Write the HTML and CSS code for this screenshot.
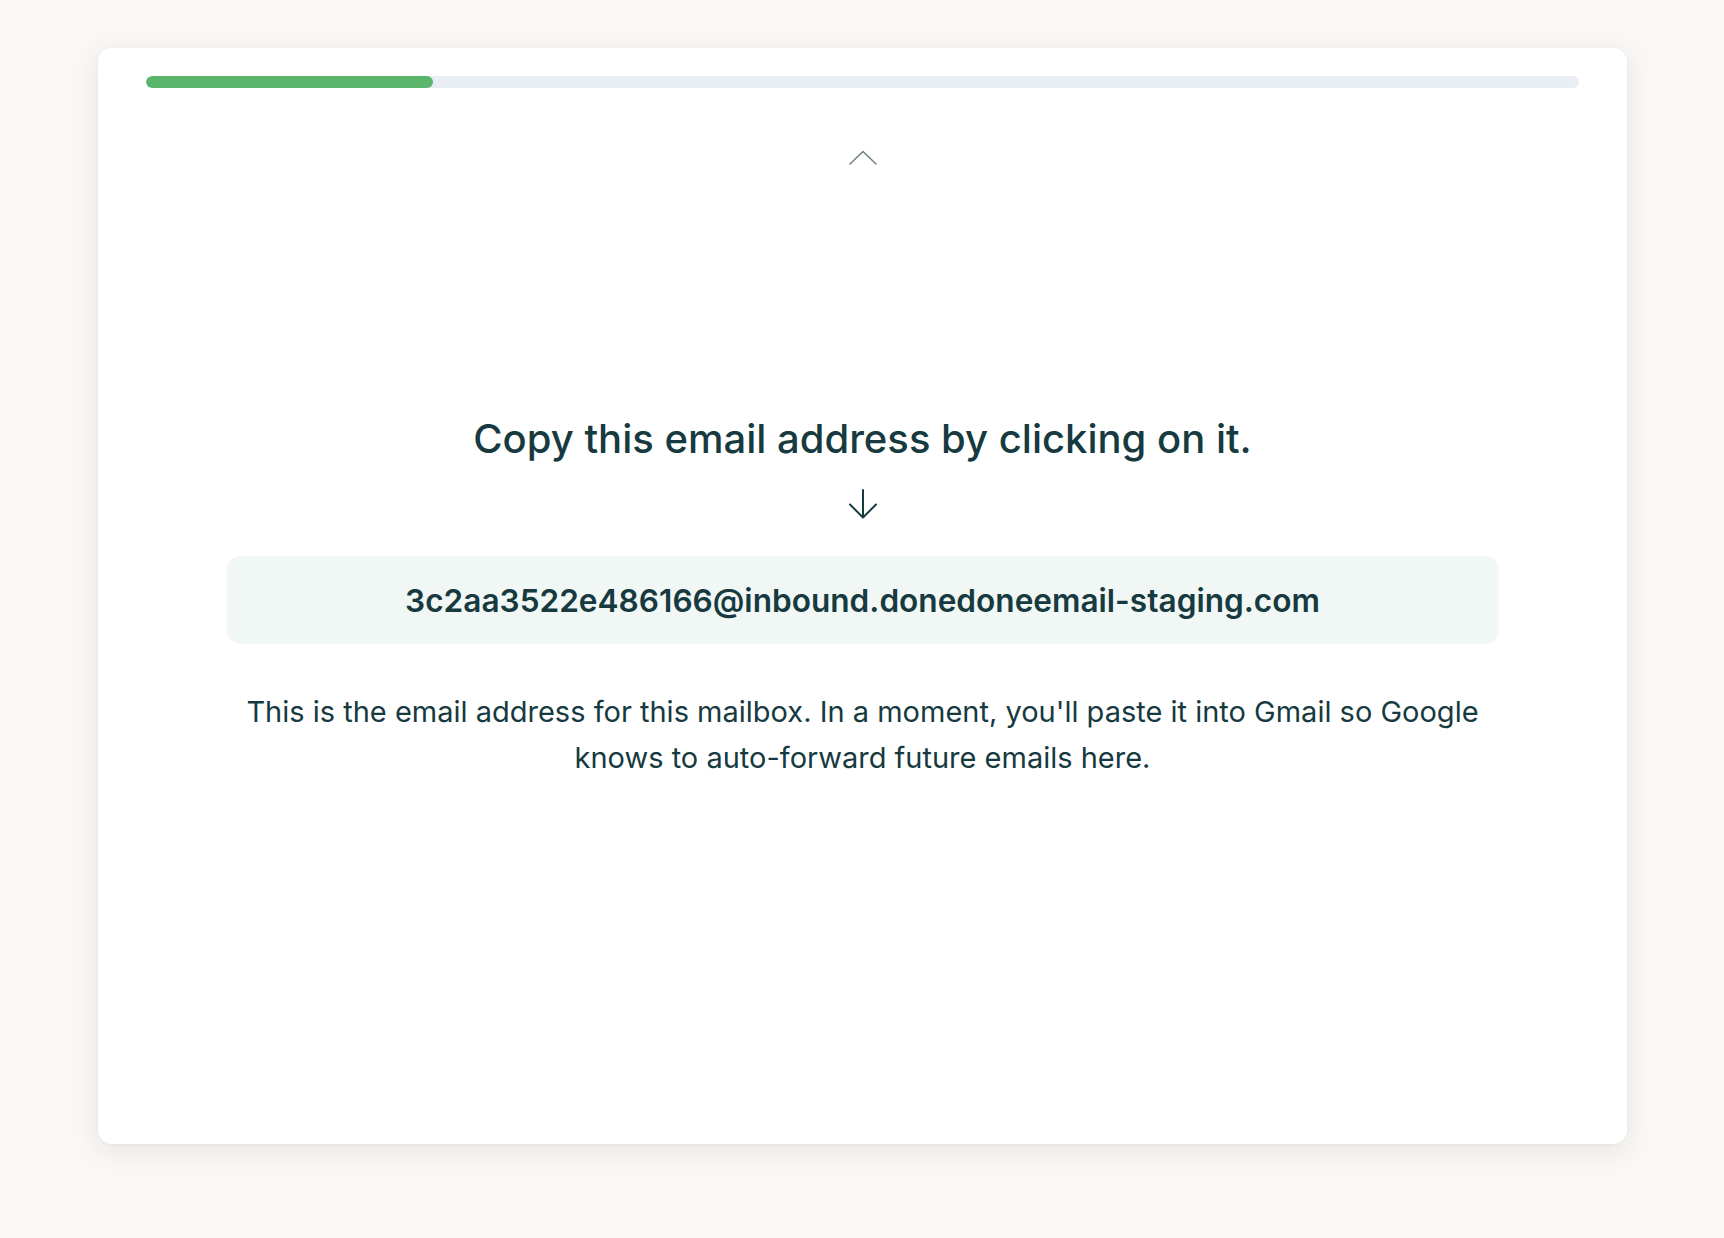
FILE: index.html
```html
<!DOCTYPE html>
<html lang="en">
<head>
<meta charset="utf-8">
<title>Copy email address</title>
<link rel="stylesheet" href="styles.css">
</head>
<body>
<main class="page">
  <section class="card">
    <div class="progress"><div class="progress-fill" style="width: 20%"></div></div>
    <div class="nav-up">
      <svg width="28" height="15" viewBox="0 0 28 15" aria-hidden="true"><path d="M1 14 L14 1.5 L27 14" fill="none" stroke="#6f8488" stroke-width="1.6" stroke-linecap="round" stroke-linejoin="round"/></svg>
    </div>
    <h1 class="title">Copy this email address by clicking on it.</h1>
    <div class="arrow-down">
      <svg width="30" height="30" viewBox="0 0 30 30" aria-hidden="true"><path d="M15 1 V28.5 M2 15.5 L15 28.5 L28 15.5" fill="none" stroke="#163a40" stroke-width="2" stroke-linecap="round" stroke-linejoin="round"/></svg>
    </div>
    <button class="email-box" type="button">3c2aa3522e486166@inbound.donedoneemail-staging.com</button>
    <p class="desc">This is the email address for this mailbox. In a moment, you'll paste it into Gmail so Google knows to auto-forward future emails here.</p>
  </section>
</main>
</body>
</html>
```

FILE: styles.css
```css
html, body {
  margin: 0;
  padding: 0;
}
body {
  background: #f9f8f6;
  font-family: "Inter", "Noto Sans", sans-serif;
  color: #163a40;
}
.page {
  padding: 48px 97px 94px 98px;
}
.card {
  box-sizing: border-box;
  height: 1096px;
  background: #ffffff;
  border-radius: 14px;
  box-shadow: 0 6px 28px rgba(40, 35, 20, 0.09), 0 1px 3px rgba(40, 35, 20, 0.04);
  padding: 28px 48px;
  display: flex;
  flex-direction: column;
  align-items: center;
}
.progress {
  align-self: stretch;
  height: 12px;
  border-radius: 6px;
  background: #e9edf4;
  overflow: hidden;
}
.progress-fill {
  height: 100%;
  background: #5bb56d;
  border-radius: 6px;
}
.nav-up {
  margin-top: 62px;
  height: 15px;
  line-height: 0;
}
.title {
  margin: 250px 0 0;
  font-size: 40px;
  line-height: 48px;
  font-weight: 550;
  color: #163a40;
  letter-spacing: 0;
}
.arrow-down {
  margin-top: 26px;
  line-height: 0;
}
.email-box {
  margin-top: 37px;
  width: 1272px;
  height: 88px;
  border: 0;
  border-radius: 14px;
  background: #f1f7f4;
  font-family: inherit;
  font-size: 31.6px;
  font-weight: 600;
  color: #163a40;
  cursor: pointer;
  padding: 0;
}
.desc {
  margin: 45px 0 0;
  width: 1272px;
  text-align: center;
  font-size: 29px;
  line-height: 46px;
  color: #163a40;
}
```
